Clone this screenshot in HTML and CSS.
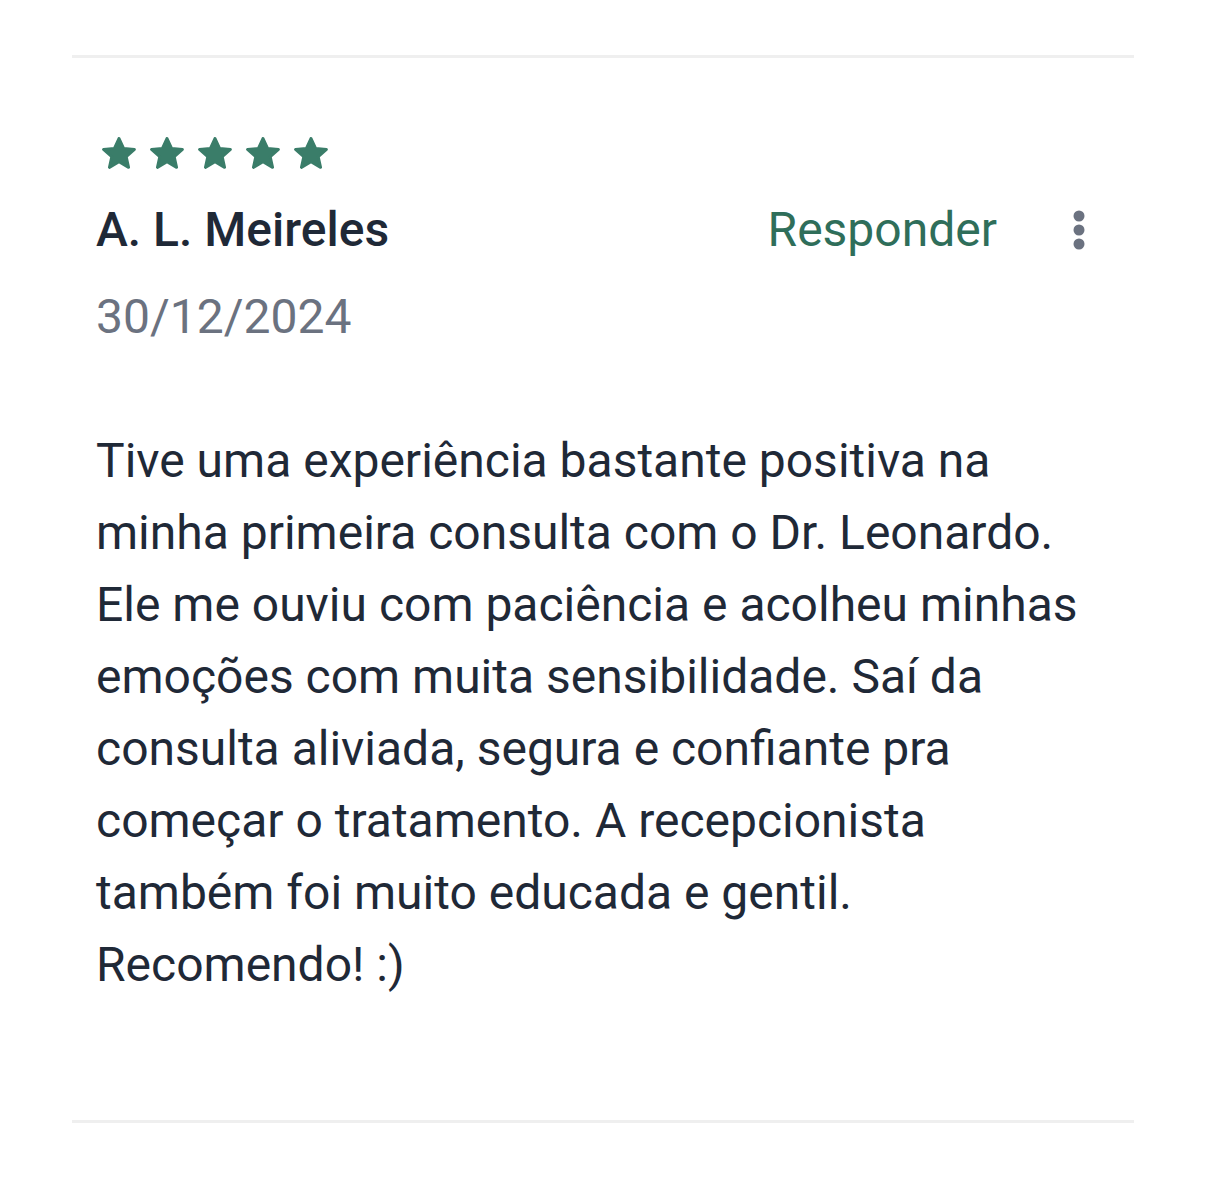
FILE: index.html
```html
<!DOCTYPE html>
<html lang="pt">
<head>
<meta charset="utf-8">
<link rel="stylesheet" href="styles.css">
</head>
<body>
<div class="review">
  <div class="stars">
    <svg class="star" viewBox="2.5 2.4 19 18"><path d="M12 3.2l2.6 5.6 6.1.6-4.6 4.1 1.3 6L12 16.4 6.6 19.5l1.3-6-4.6-4.1 6.1-.6z"/></svg>
    <svg class="star" viewBox="2.5 2.4 19 18"><path d="M12 3.2l2.6 5.6 6.1.6-4.6 4.1 1.3 6L12 16.4 6.6 19.5l1.3-6-4.6-4.1 6.1-.6z"/></svg>
    <svg class="star" viewBox="2.5 2.4 19 18"><path d="M12 3.2l2.6 5.6 6.1.6-4.6 4.1 1.3 6L12 16.4 6.6 19.5l1.3-6-4.6-4.1 6.1-.6z"/></svg>
    <svg class="star" viewBox="2.5 2.4 19 18"><path d="M12 3.2l2.6 5.6 6.1.6-4.6 4.1 1.3 6L12 16.4 6.6 19.5l1.3-6-4.6-4.1 6.1-.6z"/></svg>
    <svg class="star" viewBox="2.5 2.4 19 18"><path d="M12 3.2l2.6 5.6 6.1.6-4.6 4.1 1.3 6L12 16.4 6.6 19.5l1.3-6-4.6-4.1 6.1-.6z"/></svg>
  </div>
  <div class="header">
    <div class="name">A. L. Meireles</div>
    <div class="actions">
      <span class="reply">Responder</span>
      <svg class="more" viewBox="0 0 12 40"><circle cx="6" cy="6" r="5.5"/><circle cx="6" cy="20" r="5.5"/><circle cx="6" cy="34" r="5.5"/></svg>
    </div>
  </div>
  <div class="date">30/12/2024</div>
  <p class="text">Tive uma experiência bastante positiva na minha primeira consulta com o Dr. Leonardo. Ele me ouviu com paciência e acolheu minhas emoções com muita sensibilidade. Saí da consulta aliviada, segura e confiante pra começar o tratamento. A recepcionista também foi muito educada e gentil. Recomendo! :)</p>
</div>
</body>
</html>
```
FILE: styles.css
```css
html, body {
  margin: 0;
  padding: 0;
  background: #ffffff;
}
body {
  font-family: Roboto, "Noto Sans", sans-serif;
}
.review {
  margin: 55px 72px 0;
  border-top: 3px solid #efefef;
  border-bottom: 3px solid #efefef;
  padding: 79px 24px 119px 24px;
}
.stars {
  display: flex;
  gap: 14px;
  height: 34px;
  padding-left: 6px;
}
.star {
  width: 34px;
  height: 32px;
  fill: #3a7d69;
  stroke: #3a7d69;
  stroke-width: 1.6;
  stroke-linejoin: round;
}
.header {
  display: flex;
  justify-content: space-between;
  align-items: center;
  margin-top: 31px;
  height: 56px;
}
.name {
  font-size: 48px;
  line-height: 56px;
  font-weight: 500;
  color: #1f2937;
}
.actions {
  display: flex;
  align-items: center;
  gap: 76px;
  padding-right: 25px;
}
.reply {
  font-size: 48px;
  line-height: 56px;
  color: #2f6e5a;
}
.more {
  width: 12px;
  height: 40px;
  fill: #6b7280;
}
.date {
  margin-top: 31px;
  font-size: 48px;
  line-height: 56px;
  color: #6b7280;
}
.text {
  margin: 80px 0 0;
  font-size: 48px;
  line-height: 72px;
  color: #1f2937;
}
```
